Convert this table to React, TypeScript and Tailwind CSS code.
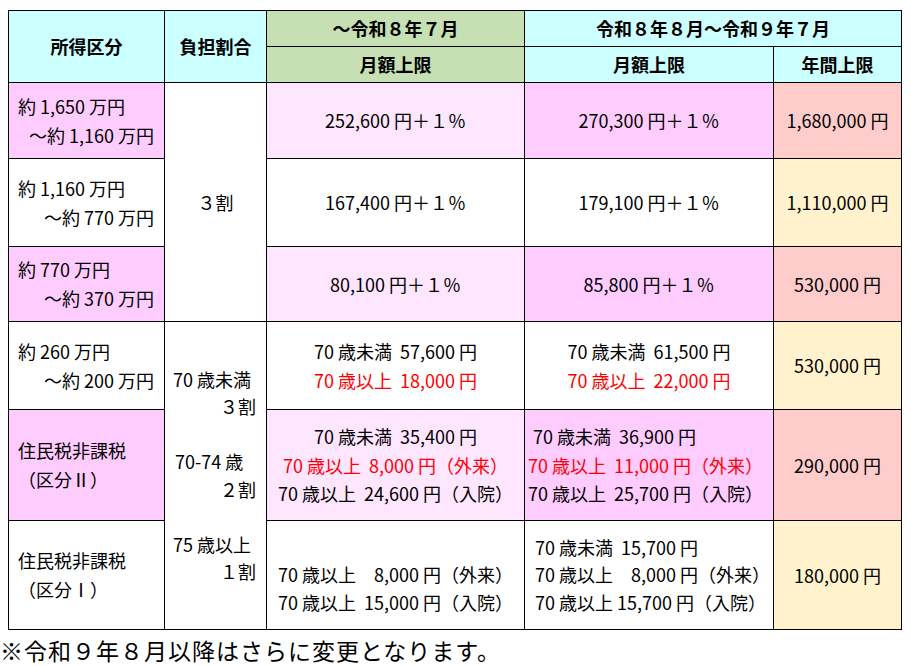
import type { ReactNode } from "react";

type TdProps = {
  bg?: string;
  className?: string;
  rowSpan?: number;
  children?: ReactNode;
};

function Td({ bg = "bg-white", className = "", rowSpan, children }: TdProps) {
  return (
    <td
      rowSpan={rowSpan}
      className={`border border-black p-0 align-middle ${bg} ${className}`}
    >
      {children}
    </td>
  );
}

function Income({
  top,
  bottom,
  bg,
  alignBottom = "text-right",
}: {
  top: string;
  bottom: string;
  bg?: string;
  alignBottom?: string;
}) {
  return (
    <Td bg={bg} className="pl-[9px] pr-[10px] leading-[29px]">
      <div className="whitespace-pre">{top}</div>
      <div className={`whitespace-pre ${alignBottom}`}>{bottom}</div>
    </Td>
  );
}

function Amount({ text, bg }: { text: string; bg?: string }) {
  return (
    <Td bg={bg} className="text-center whitespace-pre">
      {text}
    </Td>
  );
}

const red = "text-[#ff0000]";

export default function App() {
  return (
    <div className="min-h-[666px] bg-white pt-[10px] text-black font-['Noto_Sans_CJK_JP',sans-serif]">
      <table className="ml-2 w-[893px] table-fixed border-collapse text-[18px] leading-[28.5px]">
        <colgroup>
          <col className="w-[156px]" />
          <col className="w-[102px]" />
          <col className="w-[258px]" />
          <col className="w-[249px]" />
          <col className="w-[128px]" />
        </colgroup>
        <thead>
          <tr className="h-[36px]">
            <th rowSpan={2} className="border border-black bg-[#ccffff] p-0 font-bold">
              所得区分
            </th>
            <th rowSpan={2} className="border border-black bg-[#ccffff] p-0 font-bold">
              負担割合
            </th>
            <th className="border border-black bg-[#c6e0b4] p-0 font-bold">～令和８年７月</th>
            <th colSpan={2} className="border border-black bg-[#ccffff] p-0 font-bold">
              令和８年８月～令和９年７月
            </th>
          </tr>
          <tr className="h-[36px]">
            <th className="border border-black bg-[#c6e0b4] p-0 font-bold">月額上限</th>
            <th className="border border-black bg-[#ccffff] p-0 font-bold">月額上限</th>
            <th className="border border-black bg-[#ccffff] p-0 font-bold">年間上限</th>
          </tr>
        </thead>
        <tbody>
          {/* 3割 */}
          <tr className="h-[76px]">
            <Income top="約 1,650 万円" bottom="～約 1,160 万円" bg="bg-[#ffccff]" />
            <Td rowSpan={3} className="text-center">
              ３割
            </Td>
            <Amount text="252,600 円＋１％" bg="bg-[#ffe6ff]" />
            <Amount text="270,300 円＋１％" bg="bg-[#ffccff]" />
            <Amount text="1,680,000 円" bg="bg-[#ffcccc]" />
          </tr>
          <tr className="h-[88px]">
            <Income top="約 1,160 万円" bottom="～約 770 万円" />
            <Amount text="167,400 円＋１％" />
            <Amount text="179,100 円＋１％" />
            <Amount text="1,110,000 円" bg="bg-[#fff2cc]" />
          </tr>
          <tr className="h-[75px]">
            <Income top="約 770 万円" bottom="～約 370 万円" bg="bg-[#ffccff]" />
            <Amount text="80,100 円＋１％" bg="bg-[#ffe6ff]" />
            <Amount text="85,800 円＋１％" bg="bg-[#ffccff]" />
            <Amount text="530,000 円" bg="bg-[#ffcccc]" />
          </tr>

          {/* 一般・住民税非課税 */}
          <tr className="h-[88px]">
            <Income top="約 260 万円" bottom="～約 200 万円" />
            <Td rowSpan={3} className="pl-[8px] pr-[10px] leading-[27.5px]">
              <div className="whitespace-pre">70 歳未満</div>
              <div className="text-right">３割</div>
              <div className="h-[27.5px]" />
              <div className="whitespace-pre pl-[2px]">70-74 歳</div>
              <div className="text-right">２割</div>
              <div className="h-[27.5px]" />
              <div className="whitespace-pre">75 歳以上</div>
              <div className="text-right">１割</div>
            </Td>
            <Td className="text-center">
              <div className="whitespace-pre">70 歳未満  57,600 円</div>
              <div className={`whitespace-pre ${red}`}>70 歳以上  18,000 円</div>
            </Td>
            <Td className="text-center">
              <div className="whitespace-pre">70 歳未満  61,500 円</div>
              <div className={`whitespace-pre ${red}`}>70 歳以上  22,000 円</div>
            </Td>
            <Amount text="530,000 円" bg="bg-[#fff2cc]" />
          </tr>
          <tr className="h-[111px]">
            <Income top="住民税非課税" bottom="（区分Ⅱ）" bg="bg-[#ffccff]" alignBottom="" />
            <Td bg="bg-[#ffe6ff]" className="text-center">
              <div className="whitespace-pre">70 歳未満  35,400 円</div>
              <div className={`whitespace-pre ${red}`}>70 歳以上  8,000 円（外来）</div>
              <div className="whitespace-pre">70 歳以上  24,600 円（入院）</div>
            </Td>
            <Td bg="bg-[#ffccff]" className="pl-[3px]">
              <div className="whitespace-pre pl-[5px]">70 歳未満  36,900 円</div>
              <div className={`whitespace-pre ${red}`}>70 歳以上  11,000 円（外来）</div>
              <div className="whitespace-pre">70 歳以上  25,700 円（入院）</div>
            </Td>
            <Amount text="290,000 円" bg="bg-[#ffcccc]" />
          </tr>
          <tr className="h-[109px]">
            <Income top="住民税非課税" bottom="（区分Ⅰ）" alignBottom="" />
            <Td className="text-center leading-[27.5px]">
              <div className="h-[27.5px]" />
              <div className="whitespace-pre">70 歳以上　8,000 円（外来）</div>
              <div className="whitespace-pre">70 歳以上  15,000 円（入院）</div>
            </Td>
            <Td className="pl-[10px] leading-[27.5px]">
              <div className="whitespace-pre">70 歳未満  15,700 円</div>
              <div className="whitespace-pre">70 歳以上　8,000 円（外来）</div>
              <div className="whitespace-pre">70 歳以上 15,700 円（入院）</div>
            </Td>
            <Amount text="180,000 円" bg="bg-[#fff2cc]" />
          </tr>
        </tbody>
      </table>
      <p className="mt-[9px] text-[23px] leading-[22px] tracking-[1px]">
        ※令和９年８月以降はさらに変更となります。
      </p>
    </div>
  );
}
